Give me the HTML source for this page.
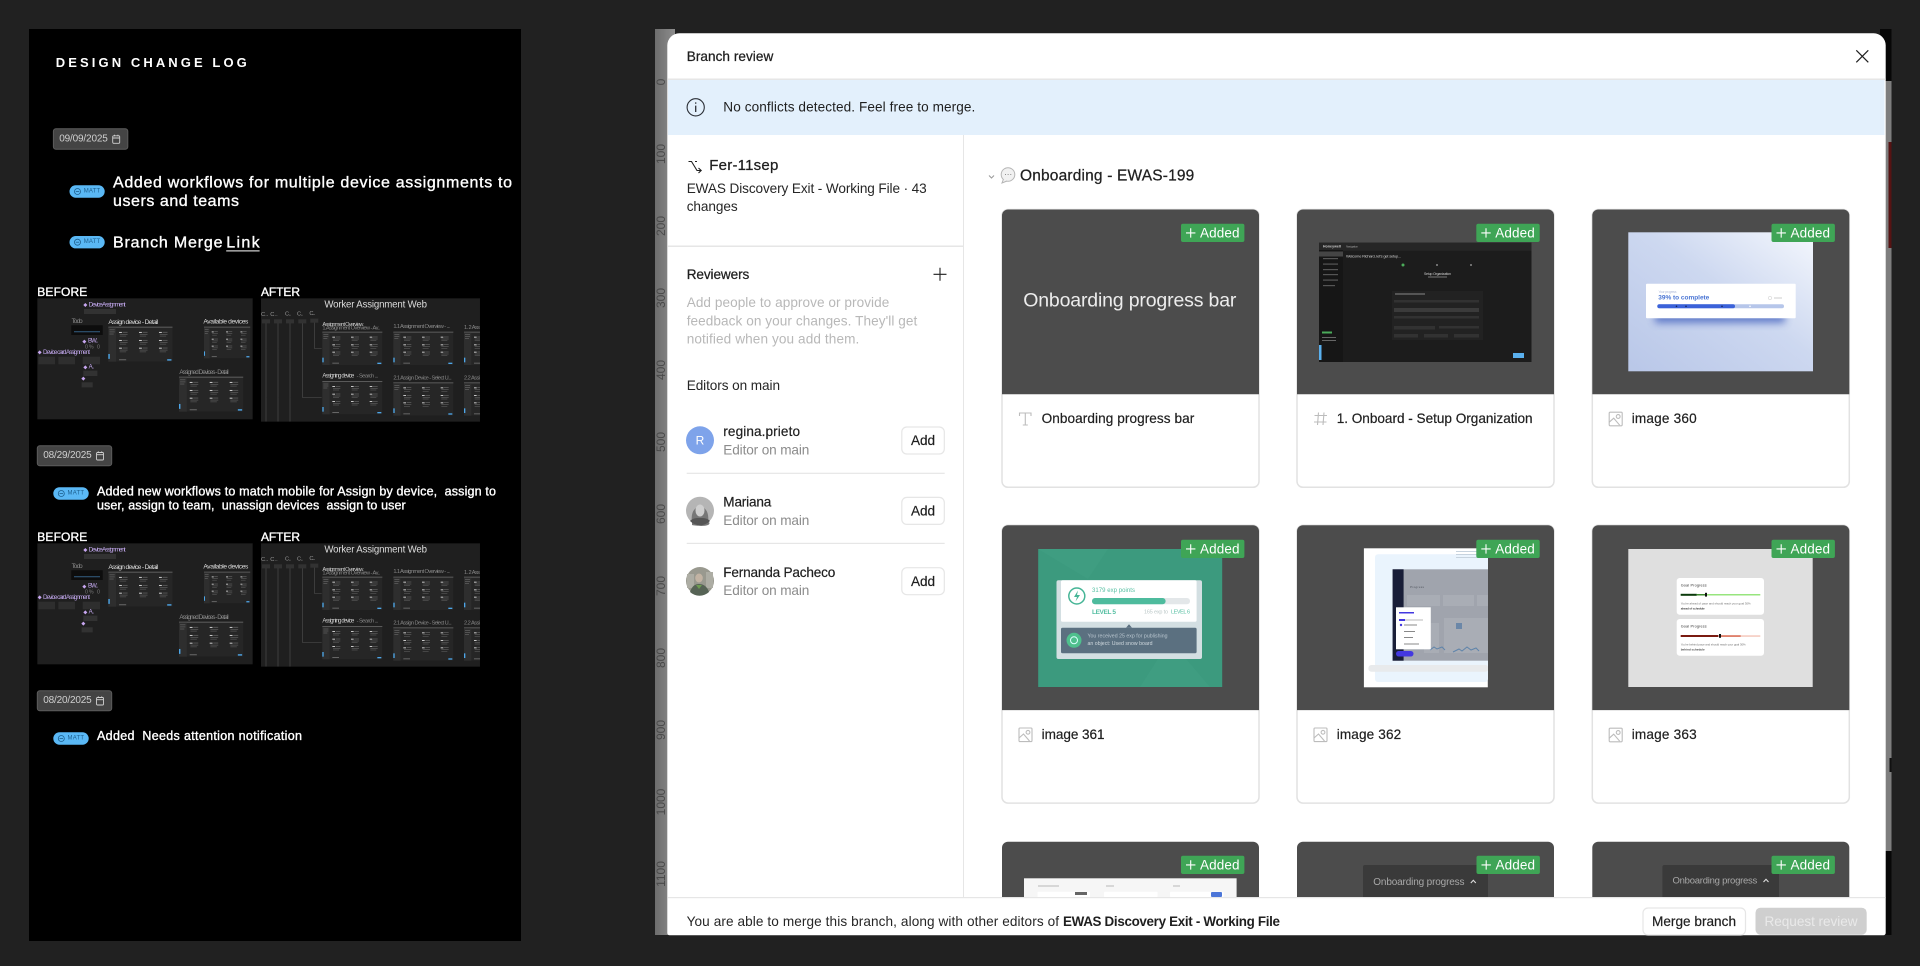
<!DOCTYPE html>
<html lang="en"><head><meta charset="utf-8"><title>Design change log and Branch review</title>
<style>
html,body{margin:0;padding:0;background:#212121;width:1920px;height:966px;overflow:hidden}
svg{display:block}
text{font-family:"Liberation Sans",sans-serif;dominant-baseline:central;white-space:pre}
.w{fill:#fff}
.m{stroke:currentColor;stroke-width:.25px}
.lw{fill:#fff;stroke:#fff;stroke-width:.35px}
.dk{fill:#1f1f1f;stroke:#1f1f1f;stroke-width:.25px}
.g{fill:#8c8c8c}
.lg{fill:#b8b8b8}
.ad{fill:#fff;font-size:13.5px}
.t{font-size:13.6px;fill:#1f1f1f;stroke:#1f1f1f;stroke-width:.2px}
.ln{fill:none;stroke:#bcbcbc;stroke-width:1.1}
.rul{fill:#4a4a4a;font-size:12px}
</style></head><body>
<svg xmlns="http://www.w3.org/2000/svg" width="1920" height="966" viewBox="0 0 1920 966">
<defs>
<linearGradient id="rg" x1="0" x2="1" y1="0" y2="0"><stop offset="0" stop-color="#6d6d6d"/><stop offset="1" stop-color="#8d8d8d"/></linearGradient>
<linearGradient id="g360" x1="0" y1="1" x2="1" y2="0"><stop offset="0" stop-color="#b9c7e8"/><stop offset=".55" stop-color="#cdd8f0"/><stop offset="1" stop-color="#f4f7fd"/></linearGradient>
<filter id="b" x="-5%" y="-5%" width="110%" height="110%"><feGaussianBlur stdDeviation="1"/></filter>
<filter id="b3" x="-2%" y="-2%" width="104%" height="104%"><feGaussianBlur stdDeviation=".35"/></filter>
<filter id="b2" x="-20%" y="-60%" width="140%" height="220%"><feGaussianBlur stdDeviation="4"/></filter>
<clipPath id="ca"><rect x="723" y="55" width="657" height="370"/></clipPath>
<clipPath id="c362"><rect x="1364" y="548" width="124" height="139"/></clipPath>
<g id="cl"><rect width="8" height="3" fill="#c8c8c8"/><rect x="10" y="0" width="14" height="2" fill="#666"/><rect x="2" y="6" width="22" height="2" fill="#5c5c5c"/><rect x="2" y="11" width="18" height="2" fill="#555"/></g>
<g id="fr">
<rect width="180" height="100" fill="#262626"/><rect width="180" height="3" fill="#5a5a5a"/><rect y="3" width="22" height="97" fill="#2d2d2d"/>
<rect x="3" y="8" width="15" height="2" fill="#666"/><rect x="3" y="14" width="15" height="2" fill="#666"/><rect x="3" y="20" width="12" height="2" fill="#666"/>
<use href="#cl" x="30" y="15"/><use href="#cl" x="86" y="15"/><use href="#cl" x="142" y="15"/>
<use href="#cl" x="30" y="38"/><use href="#cl" x="86" y="38"/><use href="#cl" x="142" y="38"/>
<use href="#cl" x="30" y="60"/><use href="#cl" x="86" y="60"/><use href="#cl" x="142" y="60"/>
<rect x="165" y="93" width="12" height="4" fill="#4ea6e8"/><rect x="30" y="93" width="20" height="3" fill="#666"/>
<rect y="78" width="4" height="14" x="0" fill="#4ea6e8"/>
</g>
<g id="bd"><rect width="63.4" height="18.3" rx="2" fill="#3fa556"/><path d="M5 9.2H14.4M9.7 4.500V13.900" stroke="#fff" stroke-width="1.100" fill="none"/></g>
<g id="cd">
<rect width="257" height="277.800" rx="6" fill="#fff" stroke="#e2e2e2" stroke-width="1.500"/>
<path d="M0 184.800V6a6 6 0 0 1 6-6H251a6 6 0 0 1 6 6V184.800Z" fill="#4c4c4c"/>
</g>
<g id="cd3"><path d="M0 55.800V6a6 6 0 0 1 6-6H251a6 6 0 0 1 6 6V55.800Z" fill="#4c4c4c"/></g>
<g id="ic"><rect x=".5" y=".5" width="13" height="13.600" rx="1" class="ln"/><path class="ln" d="M.5 10.500L5 6.500L11 13.500"/><circle cx="9.500" cy="4.800" r="1.900" class="ln"/></g>
<g id="cal" fill="none" stroke="#d0d0d0" stroke-width=".9"><rect x=".5" y="1.500" width="7" height="7.500" rx="1"/><path d="M.5 3.700H7.500M2.300 .4V2M5.700 .4V2"/></g>
<g id="dia" fill="#c7a6f0"><path d="M6 0L9 3L6 6L3 3ZM0 6L3 3L6 6L3 9ZM12 6L9 3L6 6L9 9ZM6 12L3 9L6 6L9 9Z"/></g>
</defs>

<rect width="1920" height="966" fill="#212121"/>

<!-- Left panel -->
<rect x="29" y="29" width="492" height="912" fill="#000"/>
<text x="55.800" y="62.500" font-size="13" font-weight="700" class="w" textLength="191" lengthAdjust="spacing">DESIGN CHANGE LOG</text>

<rect x="53.400" y="128.700" width="74.400" height="20.600" rx="2.500" fill="#444" stroke="#5c5c5c"/>
<text x="59.200" y="139" font-size="10" fill="#cfcfcf" textLength="48.600">09/09/2025</text>
<use href="#cal" x="112.200" y="134.300"/>

<g><rect x="69.500" y="185.300" width="35.200" height="12.400" rx="6.200" fill="#5ab8f5"/><circle cx="77.500" cy="191.500" r="3" fill="none" stroke="#1d5f8e" stroke-width=".8"/><path d="M75.800 191.500H79.200" stroke="#1d5f8e" stroke-width=".8"/><text x="83.700" y="191.500" font-size="6" fill="#1d5f8e" textLength="16.500">MATT</text></g>
<text x="113" y="183" font-size="16" class="lw" textLength="399">Added workflows for multiple device assignments to</text>
<text x="113" y="201.300" font-size="16" class="lw" textLength="126">users and teams</text>

<g><rect x="69.500" y="236" width="35.200" height="12.400" rx="6.200" fill="#5ab8f5"/><circle cx="77.500" cy="242.200" r="3" fill="none" stroke="#1d5f8e" stroke-width=".8"/><path d="M75.800 242.200H79.200" stroke="#1d5f8e" stroke-width=".8"/><text x="83.700" y="242.200" font-size="6" fill="#1d5f8e" textLength="16.500">MATT</text></g>
<text x="113" y="243" font-size="16" class="lw" textLength="109.500">Branch Merge</text>
<text x="226.200" y="243" font-size="16" class="lw" textLength="33.400">Link</text>
<rect x="226.200" y="250.400" width="33.400" height="1" fill="#fff"/>

<text x="37.300" y="292" font-size="12" class="lw" textLength="50">BEFORE</text>
<text x="261" y="292" font-size="12" class="lw" textLength="39">AFTER</text>

<!-- thumbnails set 1 -->
<g transform="translate(20,280) scale(.33333)">
<rect x="52" y="55" width="646" height="363" fill="#1f1f1f"/>
<g filter="url(#b)">
<use href="#dia" x="190" y="69"/><text x="206" y="75" font-size="19" fill="#c3a8ee" textLength="111">Device Assignment</text>
<rect x="192" y="87" width="96" height="15" fill="#333"/>
<text x="155" y="125" font-size="19" fill="#8a8a8a" textLength="33">To do</text>
<rect x="154" y="136" width="94" height="29" fill="#0b0b0b"/><rect x="162" y="153" width="78" height="4" fill="#2c4c66"/>
<text x="265" y="127" font-size="20" fill="#ddd" textLength="150">Assign device - Detail</text>
<use href="#fr" transform="translate(265,140) scale(1.070,1.050)"/>
<text x="550" y="126" font-size="20" fill="#ddd" textLength="135">Available devices</text>
<use href="#fr" transform="translate(552,140) scale(.77,.95)"/>
<use href="#dia" x="187" y="179"/><text x="204" y="185" font-size="18" fill="#c3a8ee" textLength="30">BW..</text>
<text x="195" y="202" font-size="16" fill="#777" textLength="45">0 %   0</text>
<use href="#dia" x="53" y="211"/><text x="69" y="217" font-size="19" fill="#c3a8ee" textLength="141">Device card Assignment</text>
<rect x="55" y="230" width="50" height="23" fill="#2e2e2e"/><rect x="115" y="230" width="50" height="23" fill="#2e2e2e"/><rect x="188" y="230" width="52" height="23" fill="#2e2e2e"/>
<use href="#dia" x="190" y="256"/><text x="206" y="262" font-size="18" fill="#c3a8ee" textLength="16">A..</text>
<rect x="190" y="272" width="42" height="16" fill="#333"/>
<use href="#dia" x="184" y="290"/><rect x="185" y="307" width="33" height="15" fill="#333"/>
<text x="478" y="277" font-size="19" fill="#8e8e8e" textLength="148">Assigned Devices - Detail</text>
<use href="#fr" transform="translate(477,290) scale(1.070,1.050)"/>
</g>
<rect x="723" y="55" width="657" height="370" fill="#1f1f1f"/>
<g clip-path="url(#ca)">
<text x="913" y="75" font-size="29" fill="#ddd" textLength="308">Worker Assignment Web</text>
<g filter="url(#b)">
<text x="723" y="105" font-size="17" fill="#999" textLength="50">C.. C..</text><text x="795" y="104" font-size="17" fill="#999" textLength="18">C..</text><text x="831" y="104" font-size="17" fill="#999" textLength="18">C..</text><text x="868" y="102" font-size="17" fill="#999" textLength="18">C..</text>
<path d="M738 125V425M774 125V425M810 125V425M847 125V352H905M883 125V205H905" fill="none" stroke="#4a4a4a" stroke-width="2"/>
<g fill="#333"><rect x="726" y="118" width="24" height="12"/><rect x="762" y="118" width="24" height="12"/><rect x="798" y="118" width="24" height="12"/><rect x="835" y="118" width="24" height="12"/><rect x="871" y="116" width="24" height="12"/></g>
<text x="907" y="135" font-size="17" fill="#ccc" textLength="123">Assignment Overview</text>
<text x="907" y="146" font-size="17" fill="#888" textLength="173">1.Assignment Overview - Av..</text>
<text x="1120" y="141" font-size="17" fill="#888" textLength="170">1.1 Assignment Overview - ...</text>
<text x="1332" y="144" font-size="17" fill="#888" textLength="48">1. 2 Ass</text>
<use href="#fr" transform="translate(907,155)"/><use href="#fr" transform="translate(1120,155)"/><use href="#fr" transform="translate(1332,155)"/>
<text x="907" y="290" font-size="18" fill="#ccc" textLength="96">Assigning device</text>
<text x="1010" y="290" font-size="17" fill="#888" textLength="65">- Search ...</text>
<text x="1120" y="295" font-size="17" fill="#888" textLength="175">2.1 Assign Device - Select U...</text>
<text x="1332" y="295" font-size="17" fill="#888" textLength="48">2.2 Assi</text>
<use href="#fr" transform="translate(907,303)"/><use href="#fr" transform="translate(1120,307)"/><use href="#fr" transform="translate(1332,307)"/>
</g></g>
</g>

<rect x="37.300" y="445.700" width="74.400" height="20" rx="2.500" fill="#444" stroke="#5c5c5c"/>
<text x="43.300" y="455.700" font-size="10" fill="#cfcfcf" textLength="48.400">08/29/2025</text>
<use href="#cal" x="96" y="451"/>

<g><rect x="53.300" y="487.300" width="35.400" height="12.400" rx="6.200" fill="#5ab8f5"/><circle cx="61.300" cy="493.500" r="3" fill="none" stroke="#1d5f8e" stroke-width=".8"/><path d="M59.600 493.500H63" stroke="#1d5f8e" stroke-width=".8"/><text x="67.500" y="493.500" font-size="6" fill="#1d5f8e" textLength="16.500">MATT</text></g>
<text x="97" y="491.300" font-size="12.500" class="lw" textLength="399">Added new workflows to match mobile for Assign by device,  assign to</text>
<text x="97" y="505.700" font-size="12.500" class="lw" textLength="308.700">user, assign to team,  unassign devices  assign to user</text>

<text x="37.300" y="537" font-size="12" class="lw" textLength="50">BEFORE</text>
<text x="261" y="537" font-size="12" class="lw" textLength="39">AFTER</text>

<!-- thumbnails set 2 -->
<g transform="translate(20,525) scale(.33333)">
<rect x="52" y="55" width="646" height="363" fill="#1f1f1f"/>
<g filter="url(#b)">
<use href="#dia" x="190" y="69"/><text x="206" y="75" font-size="19" fill="#c3a8ee" textLength="111">Device Assignment</text>
<rect x="192" y="87" width="96" height="15" fill="#333"/>
<text x="155" y="125" font-size="19" fill="#8a8a8a" textLength="33">To do</text>
<rect x="154" y="136" width="94" height="29" fill="#0b0b0b"/><rect x="162" y="153" width="78" height="4" fill="#2c4c66"/>
<text x="265" y="127" font-size="20" fill="#ddd" textLength="150">Assign device - Detail</text>
<use href="#fr" transform="translate(265,140) scale(1.070,1.050)"/>
<text x="550" y="126" font-size="20" fill="#ddd" textLength="135">Available devices</text>
<use href="#fr" transform="translate(552,140) scale(.77,.95)"/>
<use href="#dia" x="187" y="179"/><text x="204" y="185" font-size="18" fill="#c3a8ee" textLength="30">BW..</text>
<text x="195" y="202" font-size="16" fill="#777" textLength="45">0 %   0</text>
<use href="#dia" x="53" y="211"/><text x="69" y="217" font-size="19" fill="#c3a8ee" textLength="141">Device card Assignment</text>
<rect x="55" y="230" width="50" height="23" fill="#2e2e2e"/><rect x="115" y="230" width="50" height="23" fill="#2e2e2e"/><rect x="188" y="230" width="52" height="23" fill="#2e2e2e"/>
<use href="#dia" x="190" y="256"/><text x="206" y="262" font-size="18" fill="#c3a8ee" textLength="16">A..</text>
<rect x="190" y="272" width="42" height="16" fill="#333"/>
<use href="#dia" x="184" y="290"/><rect x="185" y="307" width="33" height="15" fill="#333"/>
<text x="478" y="277" font-size="19" fill="#8e8e8e" textLength="148">Assigned Devices - Detail</text>
<use href="#fr" transform="translate(477,290) scale(1.070,1.050)"/>
</g>
<rect x="723" y="55" width="657" height="370" fill="#1f1f1f"/>
<g clip-path="url(#ca)">
<text x="913" y="75" font-size="29" fill="#ddd" textLength="308">Worker Assignment Web</text>
<g filter="url(#b)">
<text x="723" y="105" font-size="17" fill="#999" textLength="50">C.. C..</text><text x="795" y="104" font-size="17" fill="#999" textLength="18">C..</text><text x="831" y="104" font-size="17" fill="#999" textLength="18">C..</text><text x="868" y="102" font-size="17" fill="#999" textLength="18">C..</text>
<path d="M738 125V425M774 125V425M810 125V425M847 125V352H905M883 125V205H905" fill="none" stroke="#4a4a4a" stroke-width="2"/>
<g fill="#333"><rect x="726" y="118" width="24" height="12"/><rect x="762" y="118" width="24" height="12"/><rect x="798" y="118" width="24" height="12"/><rect x="835" y="118" width="24" height="12"/><rect x="871" y="116" width="24" height="12"/></g>
<text x="907" y="135" font-size="17" fill="#ccc" textLength="123">Assignment Overview</text>
<text x="907" y="146" font-size="17" fill="#888" textLength="173">1.Assignment Overview - Av..</text>
<text x="1120" y="141" font-size="17" fill="#888" textLength="170">1.1 Assignment Overview - ...</text>
<text x="1332" y="144" font-size="17" fill="#888" textLength="48">1. 2 Ass</text>
<use href="#fr" transform="translate(907,155)"/><use href="#fr" transform="translate(1120,155)"/><use href="#fr" transform="translate(1332,155)"/>
<text x="907" y="290" font-size="18" fill="#ccc" textLength="96">Assigning device</text>
<text x="1010" y="290" font-size="17" fill="#888" textLength="65">- Search ...</text>
<text x="1120" y="295" font-size="17" fill="#888" textLength="175">2.1 Assign Device - Select U...</text>
<text x="1332" y="295" font-size="17" fill="#888" textLength="48">2.2 Assi</text>
<use href="#fr" transform="translate(907,303)"/><use href="#fr" transform="translate(1120,307)"/><use href="#fr" transform="translate(1332,307)"/>
</g></g>
</g>

<rect x="37.300" y="690.700" width="74.400" height="20" rx="2.500" fill="#444" stroke="#5c5c5c"/>
<text x="43.300" y="700.700" font-size="10" fill="#cfcfcf" textLength="48.400">08/20/2025</text>
<use href="#cal" x="96" y="696"/>

<g><rect x="53.300" y="732.300" width="35.400" height="12.400" rx="6.200" fill="#5ab8f5"/><circle cx="61.300" cy="738.500" r="3" fill="none" stroke="#1d5f8e" stroke-width=".8"/><path d="M59.600 738.500H63" stroke="#1d5f8e" stroke-width=".8"/><text x="67.500" y="738.500" font-size="6" fill="#1d5f8e" textLength="16.500">MATT</text></g>
<text x="97" y="736" font-size="12.500" class="lw" textLength="205">Added  Needs attention notification</text>

<!-- Canvas behind the modal -->
<rect x="655" y="29" width="20" height="906" fill="url(#rg)"/>
<g class="rul">
<text transform="translate(661,82) rotate(-90)" text-anchor="middle">0</text>
<text transform="translate(661,154) rotate(-90)" text-anchor="middle">100</text>
<text transform="translate(661,226) rotate(-90)" text-anchor="middle">200</text>
<text transform="translate(661,298) rotate(-90)" text-anchor="middle">300</text>
<text transform="translate(661,370) rotate(-90)" text-anchor="middle">400</text>
<text transform="translate(661,442) rotate(-90)" text-anchor="middle">500</text>
<text transform="translate(661,514) rotate(-90)" text-anchor="middle">600</text>
<text transform="translate(661,586) rotate(-90)" text-anchor="middle">700</text>
<text transform="translate(661,658) rotate(-90)" text-anchor="middle">800</text>
<text transform="translate(661,730) rotate(-90)" text-anchor="middle">900</text>
<text transform="translate(661,802) rotate(-90)" text-anchor="middle">1000</text>
<text transform="translate(661,874) rotate(-90)" text-anchor="middle">1100</text>
</g>
<rect x="1880" y="29" width="11.500" height="906" fill="#070707"/>
<rect x="1880" y="81" width="11.500" height="770" fill="#7e7e7e"/>
<rect x="1888.500" y="142" width="3" height="106" fill="#571313"/>
<rect x="1889.500" y="758" width="2" height="14" fill="#111"/>

<!-- Modal -->
<path d="M667.300 45.300a12 12 0 0 1 12-12H1873.700a12 12 0 0 1 12 12V933a2.300 2.300 0 0 1-2.300 2.300H669.600a2.300 2.300 0 0 1-2.300-2.300Z" fill="#fff"/>
<text x="686.700" y="56.300" font-size="13.600" class="dk" textLength="86.600">Branch review</text>
<path d="M1856.300 50.300L1868.300 62.300M1868.300 50.300L1856.300 62.300" stroke="#1f1f1f" stroke-width="1.200" fill="none"/>
<rect x="667.300" y="78.500" width="1218.400" height="1.500" fill="#e6e6e6"/>
<rect x="668" y="80" width="1216.500" height="55" fill="#e3f0fc"/>
<circle cx="695.700" cy="107.300" r="8.600" fill="none" stroke="#2b2f36" stroke-width="1.100"/>
<path d="M695.700 105.600V112M695.700 102.400V103.800" stroke="#2b2f36" stroke-width="1.300"/>
<text x="723.300" y="107" font-size="13.600" fill="#1f1f1f" textLength="252">No conflicts detected. Feel free to merge.</text>

<!-- Sidebar -->
<rect x="963" y="135" width="1" height="762" fill="#e6e6e6"/>
<path d="M688.500 161.500H691.500L697 170.500H701M697 161.500H695M698.500 168L701.200 170.500L698.500 173" fill="none" stroke="#1f1f1f" stroke-width="1.100"/>
<text x="709.300" y="165.700" font-size="15" class="dk" textLength="69">Fer-11sep</text>
<text x="686.700" y="188.300" font-size="13.600" fill="#262626" textLength="240">EWAS Discovery Exit - Working File · 43</text>
<text x="686.700" y="206.700" font-size="13.600" fill="#262626" textLength="51">changes</text>
<rect x="667.300" y="245.500" width="296" height="1.500" fill="#e6e6e6"/>
<text x="686.700" y="274.300" font-size="13.600" class="dk" textLength="62.600">Reviewers</text>
<path d="M933.500 274.300H946.500M940 267.800V280.800" stroke="#1f1f1f" stroke-width="1.100"/>
<text x="686.700" y="302.300" font-size="13.600" class="lg" textLength="202.600">Add people to approve or provide</text>
<text x="686.700" y="321" font-size="13.600" class="lg" textLength="230.600">feedback on your changes. They'll get</text>
<text x="686.700" y="339" font-size="13.600" class="lg" textLength="172.600">notified when you add them.</text>
<text x="686.700" y="385.300" font-size="13.600" fill="#262626" textLength="93.300">Editors on main</text>

<circle cx="700" cy="440.300" r="14" fill="#7ea3ea"/>
<text x="700" y="440.300" font-size="12" fill="#fff" text-anchor="middle">R</text>
<text x="723.300" y="431.700" class="t" textLength="76.700">regina.prieto</text>
<text x="723.300" y="450" font-size="13.600" class="g" textLength="86">Editor on main</text>
<rect x="901.800" y="427" width="42.500" height="27" rx="5" fill="#fff" stroke="#e6e6e6" stroke-width="1.200"/>
<text x="911" y="440.500" class="t" textLength="24">Add</text>
<rect x="686.700" y="472.700" width="258" height="1.200" fill="#e6e6e6"/>

<circle cx="700" cy="510.700" r="14" fill="#b5b5b5"/>
<path d="M692 522c-1-5 0-15 8-15s9 10 8 15c2 0 2 2 0 3-3 1.500-12 1-16 0z" fill="#777"/>
<ellipse cx="700" cy="510.500" rx="4.500" ry="6" fill="#cfcfcf"/>
<path d="M690 521c3-3 6-3 10-3s7 0 10 3a14 14 0 0 1-20 0z" fill="#555"/>
<text x="723.300" y="502" class="t" textLength="48">Mariana</text>
<text x="723.300" y="520.300" font-size="13.600" class="g" textLength="86">Editor on main</text>
<rect x="901.800" y="497.400" width="42.500" height="27" rx="5" fill="#fff" stroke="#e6e6e6" stroke-width="1.200"/>
<text x="911" y="511" class="t" textLength="24">Add</text>
<rect x="686.700" y="542.800" width="258" height="1.200" fill="#e6e6e6"/>

<circle cx="700" cy="581" r="14" fill="#99998f"/>
<path d="M687 574h7v14h-7zM706 572h7v16h-7z" fill="#adada4"/>
<ellipse cx="699" cy="578" rx="3.800" ry="4.500" fill="#c2b3a3"/>
<path d="M690 592c2-6 5-8 9-8s8 2 10 8a14 14 0 0 1-19 0z" fill="#566355"/>
<path d="M696 585l3 4 3-4z" fill="#6d9b52"/>
<text x="723.300" y="572.300" class="t" textLength="112">Fernanda Pacheco</text>
<text x="723.300" y="590.700" font-size="13.600" class="g" textLength="86">Editor on main</text>
<rect x="901.800" y="567.700" width="42.500" height="27" rx="5" fill="#fff" stroke="#e6e6e6" stroke-width="1.200"/>
<text x="911" y="581.300" class="t" textLength="24">Add</text>

<!-- Main heading -->
<path d="M989 175.500L991.500 178L994 175.500" fill="none" stroke="#999" stroke-width="1"/>
<circle cx="1008" cy="174.500" r="6.800" fill="#f1f1f1" stroke="#b5b5b5"/>
<path d="M1003.500 179L1002 183L1007 181" fill="#f1f1f1" stroke="#b5b5b5"/>
<path d="M1005 174.500h.8M1007.700 174.500h.8M1010.400 174.500h.8" stroke="#777" stroke-width="1.100"/>
<text x="1020" y="176" font-size="15.500" class="dk" textLength="174.300">Onboarding - EWAS-199</text>

<!-- Row 1 -->
<use href="#cd" x="1002" y="209.500"/>
<text x="1023.200" y="300.700" font-size="19.500" fill="#ececec" textLength="213.200">Onboarding progress bar</text>
<use href="#bd" x="1181" y="223.700"/><text x="1200" y="232.900" class="ad" textLength="39.500">Added</text>
<path class="ln" d="M1019.500 416V413H1031V416M1025.300 413V425M1022.800 425H1027.800"/>
<text x="1041.600" y="418.700" class="t" textLength="152.700">Onboarding progress bar</text>

<use href="#cd" x="1297" y="209.500"/>
<rect x="1319" y="242.700" width="212.500" height="119.300" fill="#1c1c1c"/>
<g filter="url(#b3)">
<rect x="1319" y="242.700" width="212.500" height="8" fill="#282828"/>
<text x="1323" y="246.700" font-size="3.500" font-weight="700" fill="#ccc" textLength="18">Honeywell</text>
<text x="1346" y="246.700" font-size="3" fill="#999" textLength="12">Navigation</text>
<rect x="1319" y="250" width="24" height="112" fill="#171717"/>
<rect x="1319" y="251.500" width="24" height="5" fill="#444"/>
<g fill="#555"><rect x="1323" y="258" width="15" height="1.200"/><rect x="1323" y="263.500" width="15" height="1.200"/><rect x="1323" y="269" width="15" height="1.200"/><rect x="1323" y="274" width="15" height="1.200"/><rect x="1323" y="279.500" width="15" height="1.200"/><rect x="1323" y="285" width="12" height="1.200"/></g>
<rect x="1322" y="331.500" width="10" height="2" fill="#4bab5a"/><rect x="1322" y="337" width="14" height="1" fill="#666"/><rect x="1322" y="340" width="14" height="1" fill="#666"/>
<rect x="1319" y="345" width="2.500" height="15" fill="#5ab0ee"/>
<text x="1346" y="256" font-size="4" fill="#ccc" textLength="55">Welcome Richard, let's get setup...</text>
<circle cx="1403" cy="265" r="1.500" fill="#4bab5a"/><circle cx="1437" cy="265" r="1" fill="#888"/><circle cx="1471" cy="265" r="1" fill="#888"/>
<text x="1424" y="274" font-size="3.500" fill="#ccc" textLength="27">Setup Organization</text><rect x="1428" y="276.500" width="19" height="1" fill="#777"/>
<rect x="1392" y="291" width="91" height="49" fill="#242424"/>
<rect x="1395" y="293.500" width="30" height="1" fill="#888"/>
<g fill="#303030"><rect x="1394" y="300" width="85" height="2.500"/><rect x="1394" y="308" width="85" height="4" fill="#3a3a3a"/><rect x="1394" y="316" width="85" height="2.500"/><rect x="1394" y="326" width="41" height="3.500"/><rect x="1439" y="326" width="40" height="2.500"/><rect x="1394" y="334" width="24" height="3.500"/><rect x="1424" y="334" width="24" height="3.500"/><rect x="1454" y="334" width="25" height="3.500"/></g>
<rect x="1513" y="353" width="11" height="5" fill="#5ab0ee"/>
</g>
<use href="#bd" x="1476.300" y="223.700"/><text x="1495.300" y="232.900" class="ad" textLength="39.500">Added</text>
<path class="ln" d="M1314.500 415.500H1327M1314 422H1326.500M1318.500 412.500L1317.500 425M1324 412.500L1323 425"/>
<text x="1336.700" y="418.700" class="t" textLength="195.900">1. Onboard - Setup Organization</text>

<use href="#cd" x="1592.300" y="209.500"/>
<rect x="1628.300" y="232.300" width="184.700" height="139" fill="url(#g360)"/>
<rect x="1655" y="311" width="130" height="12" fill="#3f5fbd" opacity=".75" filter="url(#b2)"/>
<rect x="1646" y="283.700" width="149.700" height="34.600" rx="1" fill="#fff"/>
<text x="1658.500" y="292" font-size="3.500" fill="#b6c0dc" textLength="18">Your progress</text>
<text x="1658.300" y="298" font-size="6.500" font-weight="700" fill="#4a75d4" textLength="51">39% to complete</text>
<circle cx="1770" cy="298" r="1.700" fill="none" stroke="#c8c8c8" stroke-width=".5"/><rect x="1774" y="297.500" width="8" height="1" fill="#cdcdcd"/>
<rect x="1657.300" y="304.300" width="126.700" height="4" rx="2" fill="#b6c6ea"/>
<rect x="1657.300" y="304.300" width="77.700" height="4" rx="2" fill="#3b62d9"/>
<g fill="#14245a"><circle cx="1676.500" cy="306.300" r=".8"/><circle cx="1686" cy="306.300" r=".8"/><circle cx="1722" cy="306.300" r=".8"/></g><circle cx="1750" cy="306.300" r=".8" fill="#fff"/>
<use href="#bd" x="1771.500" y="223.700"/><text x="1790.500" y="232.900" class="ad" textLength="39.500">Added</text>
<use href="#ic" x="1608.700" y="411.700"/>
<text x="1631.700" y="418.700" class="t" textLength="65">image 360</text>

<!-- Row 2 -->
<use href="#cd" x="1002" y="525.300"/>
<rect x="1038.200" y="549" width="184" height="138" fill="#3c9a7e"/>
<path d="M1038 549h70l-20 30zM1170 640l40 47h-70z" fill="#46a487" opacity=".35"/>
<rect x="1056.500" y="580.300" width="145.500" height="78.700" rx="2" fill="#d3dfe2"/>
<rect x="1061" y="580.300" width="135.600" height="41.400" rx="1.500" fill="#fff"/>
<circle cx="1076.800" cy="596" r="8" fill="#fff" stroke="#46b596" stroke-width="1.500"/>
<path d="M1078 590.500L1074 597H1077L1075.500 601.500L1080 595H1077Z" fill="#46b596"/>
<text x="1092" y="591" font-size="6" fill="#55bfa2" textLength="43">3179 exp points</text>
<rect x="1092" y="598" width="98" height="6.300" rx="3" fill="#e3e7e9"/>
<rect x="1092" y="598" width="73.600" height="6.300" rx="3" fill="#4ebb9d"/>
<text x="1092" y="612.300" font-size="6.500" font-weight="700" fill="#55bfa2" textLength="24">LEVEL 5</text>
<text x="1144" y="612.300" font-size="5.500" fill="#bcc8c8" textLength="24">165 exp to</text>
<text x="1171" y="612.300" font-size="5.500" fill="#55bfa2" textLength="19">LEVEL 6</text>
<path d="M1126 627.700l3-3.500l3 3.500z" fill="#5b7080"/>
<rect x="1061" y="627.700" width="135.600" height="25.600" rx="1.500" fill="#5b7080"/>
<circle cx="1074" cy="640.300" r="7.500" fill="#4fc08d"/><circle cx="1074" cy="640.300" r="3.500" fill="none" stroke="#dff" stroke-width="1"/>
<text x="1087.500" y="636.700" font-size="5.200" fill="#b9c6cf" textLength="80">You received 25 exp for publishing</text>
<text x="1087.500" y="644" font-size="5.200" fill="#d0d9de" textLength="65">an object: Used snow board</text>
<use href="#bd" x="1181" y="539.700"/><text x="1200" y="548.900" class="ad" textLength="39.500">Added</text>
<use href="#ic" x="1018.500" y="727.500"/>
<text x="1041.600" y="734.700" class="t" textLength="63">image 361</text>

<use href="#cd" x="1297" y="525.300"/>
<rect x="1363.900" y="548.300" width="123.900" height="139" fill="#fff"/>
<g clip-path="url(#c362)">
<rect x="1375" y="554.300" width="113" height="127.700" rx="3" fill="#eaf4fd"/>
<rect x="1392.600" y="569.300" width="96" height="91.400" fill="#a0a4ad"/>
<rect x="1392.600" y="569.300" width="11" height="91.400" fill="#191e38"/>
<text x="1410" y="587" font-size="3" fill="#50555e" textLength="14">Progress</text>
<g fill="#a9adb5"><rect x="1407" y="595" width="33" height="11"/><rect x="1443" y="595" width="31" height="11"/><rect x="1477" y="595" width="12" height="11"/><rect x="1444" y="618" width="44" height="35"/></g>
<rect x="1424" y="623" width="15" height="30" fill="#a9adb5"/>
<rect x="1456" y="623" width="6" height="6" fill="#6b87a8"/>
<path d="M1430 650l4-3 3 2 5-2 3 3M1453 652l6-3 3 2 5-4 4 3 5-2 3 3" fill="none" stroke="#5f84aa" stroke-width="1"/>
<rect x="1396" y="607.300" width="34.800" height="42" fill="#fff"/>
<rect x="1399" y="619" width="24" height="2" fill="#dcdcdc"/><rect x="1399" y="619" width="6" height="2" fill="#4338e0"/>
<circle cx="1401" cy="625" r="1.200" fill="#4338e0"/>
<g fill="#888"><rect x="1404" y="624.500" width="13" height="1"/><rect x="1404" y="631" width="11" height="1"/><rect x="1404" y="637" width="9" height="1"/><rect x="1404" y="643.500" width="15" height="1"/></g>
<rect x="1399" y="612" width="15" height="1.500" fill="#4338e0"/>
<rect x="1396" y="651" width="17.500" height="5.500" rx="2.700" fill="#4338e0"/>
<rect x="1368.400" y="665" width="120" height="6.700" rx="3" fill="#e8eaec"/>
<g fill="#c7d3de"><rect x="1456" y="551" width="22" height="1"/><rect x="1456" y="554" width="22" height="1"/><rect x="1456" y="557" width="22" height="1"/></g>
</g>
<use href="#bd" x="1476.300" y="539.700"/><text x="1495.300" y="548.900" class="ad" textLength="39.500">Added</text>
<use href="#ic" x="1313.500" y="727.500"/>
<text x="1336.700" y="734.700" class="t" textLength="64.500">image 362</text>

<use href="#cd" x="1592.300" y="525.300"/>
<rect x="1628.300" y="549" width="184.400" height="138" fill="#dfdfdf"/>
<rect x="1676.700" y="578" width="87.300" height="36.700" rx="3" fill="#fff"/>
<text x="1680.700" y="585.300" font-size="3.800" fill="#333" textLength="26">Goal Progress</text>
<rect x="1680.700" y="594" width="79.600" height="1.500" fill="#97e57e"/><rect x="1680.700" y="593.800" width="16" height="2" fill="#0b3a0b"/><rect x="1696.700" y="594" width="9" height="1.500" fill="#3e8a2f"/><rect x="1705" y="592.800" width="2" height="3.800" fill="#111"/>
<text x="1680.700" y="603.300" font-size="3" fill="#777" textLength="70">You're ahead of pace and should reach your goal 30%</text>
<text x="1680.700" y="608.300" font-size="3" font-weight="700" fill="#444" textLength="24">ahead of schedule</text>
<rect x="1676.700" y="619" width="87.300" height="36.700" rx="3" fill="#fff"/>
<text x="1680.700" y="626.700" font-size="3.800" fill="#333" textLength="26">Goal Progress</text>
<rect x="1680.700" y="635.300" width="79.600" height="1.500" fill="#f4c8bc"/><rect x="1719" y="635.300" width="21.700" height="1.500" fill="#d96a52"/><rect x="1680.700" y="635" width="37.600" height="2" fill="#7a1a10"/><rect x="1719" y="634" width="2" height="3.800" fill="#111"/>
<text x="1680.700" y="644.700" font-size="3" fill="#777" textLength="65">You're behind pace and should reach your goal 30%</text>
<text x="1680.700" y="649.700" font-size="3" font-weight="700" fill="#444" textLength="24">behind schedule</text>
<use href="#bd" x="1771.500" y="539.700"/><text x="1790.500" y="548.900" class="ad" textLength="39.500">Added</text>
<use href="#ic" x="1608.700" y="727.700"/>
<text x="1631.700" y="734.700" class="t" textLength="65">image 363</text>

<!-- Row 3 (cut off by the footer) -->
<use href="#cd3" x="1002" y="841.700"/>
<rect x="1024" y="878.300" width="212.600" height="19" fill="#f6f6f6"/>
<g fill="#b8b8b8"><rect x="1038" y="885.500" width="21" height="1"/><rect x="1106" y="885.500" width="8" height="1"/><rect x="1173" y="885.500" width="7" height="1"/></g>
<g fill="#fff"><rect x="1037.500" y="891.700" width="52.500" height="5.600" rx="1"/><rect x="1104" y="891.700" width="53.600" height="5.600" rx="1"/><rect x="1170" y="891.700" width="53.600" height="5.600" rx="1"/></g>
<rect x="1211" y="892" width="11" height="5" rx="1" fill="#4c76d8"/><rect x="1075" y="892" width="12" height="3" fill="#666"/>
<use href="#bd" x="1181" y="855.700"/><text x="1200" y="864.900" class="ad" textLength="39.500">Added</text>

<use href="#cd3" x="1297" y="841.700"/>
<path d="M1363 897.300V867a2 2 0 0 1 2-2H1486a2 2 0 0 1 2 2V897.300Z" fill="#3a3a3a"/>
<text x="1373.300" y="882.300" font-size="10" fill="#a8a8a8" textLength="91.200">Onboarding progress</text>
<path d="M1470.800 883L1473.300 880.300L1475.800 883" fill="none" stroke="#ddd" stroke-width="1.100"/>
<use href="#bd" x="1476.500" y="855.700"/><text x="1495.500" y="864.900" class="ad" textLength="39.500">Added</text>

<use href="#cd3" x="1592.300" y="841.700"/>
<path d="M1662.400 897.300V867a2 2 0 0 1 2-2H1777a2 2 0 0 1 2 2V897.300Z" fill="#3a3a3a"/>
<text x="1672.500" y="881" font-size="9.500" fill="#a8a8a8" textLength="84.800">Onboarding progress</text>
<path d="M1763.500 882L1766 879.300L1768.500 882" fill="none" stroke="#ddd" stroke-width="1.100"/>
<use href="#bd" x="1771.500" y="855.700"/><text x="1790.500" y="864.900" class="ad" textLength="39.500">Added</text>

<!-- Footer -->
<rect x="667.300" y="897" width="1218.400" height="1.200" fill="#e6e6e6"/>
<text x="686.600" y="921.700" font-size="13.600" fill="#262626" textLength="372.400">You are able to merge this branch, along with other editors of</text>
<text x="1063" y="921.700" font-size="13.400" font-weight="700" fill="#1f1f1f" textLength="217">EWAS Discovery Exit - Working File</text>
<rect x="1643" y="908" width="102.500" height="27" rx="5" fill="#fff" stroke="#e6e6e6" stroke-width="1.200"/>
<text x="1652" y="921.700" class="t" textLength="84">Merge branch</text>
<rect x="1755.500" y="907.700" width="111.200" height="27" rx="5" fill="#cfcfcf"/>
<text x="1764.500" y="921.700" font-size="13.600" fill="#e9e9e9" textLength="93.100">Request review</text>
</svg>
</body></html>
